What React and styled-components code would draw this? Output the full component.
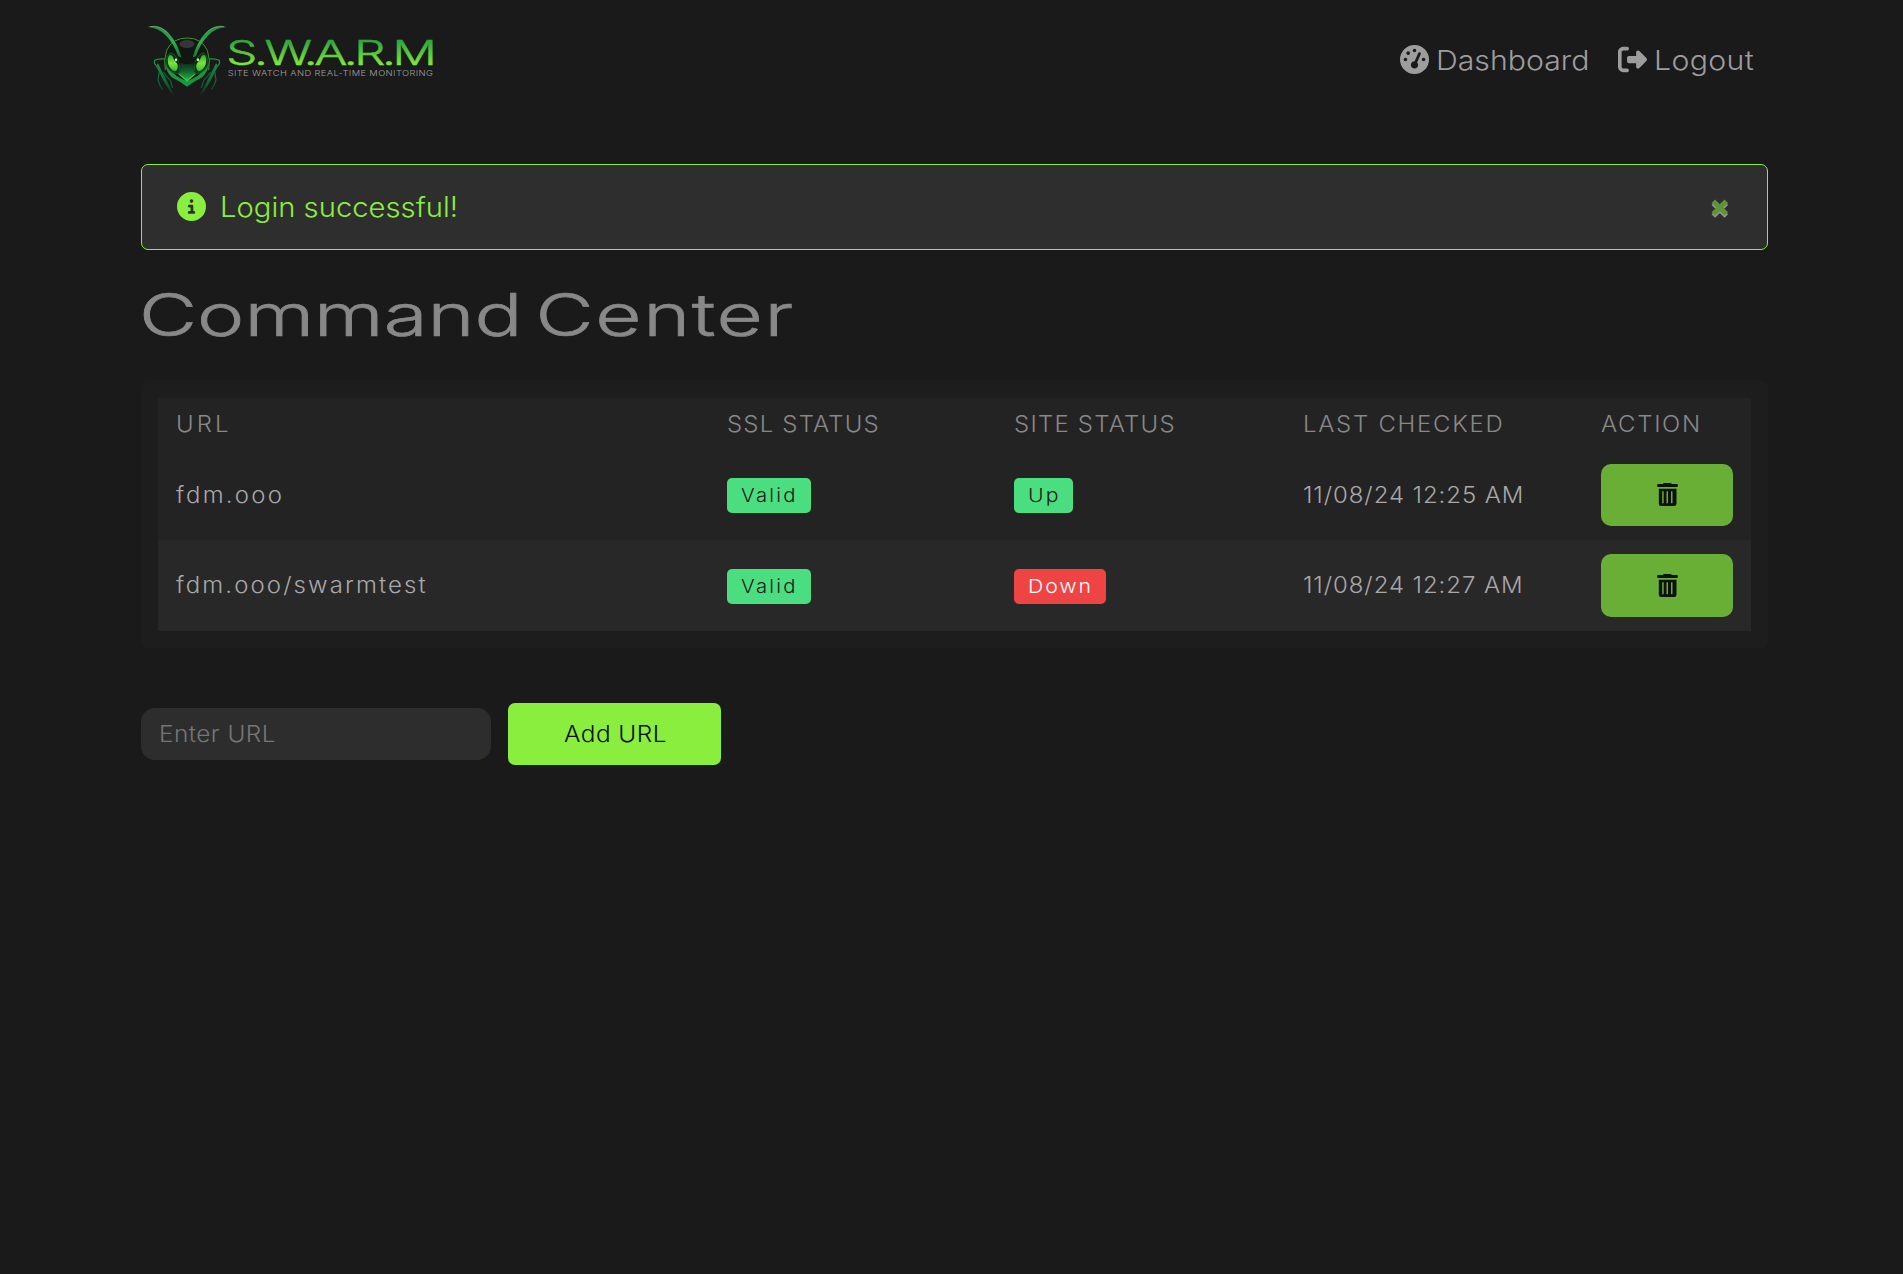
import React from 'react';
import styled, { createGlobalStyle } from 'styled-components';
import { FaGaugeHigh, FaRightFromBracket, FaCircleInfo } from 'react-icons/fa6';

const GlobalStyle = createGlobalStyle`
  *, *::before, *::after { box-sizing: border-box; }
  body {
    margin: 0;
    background: #1a1a1a;
    color: #a3a3a3;
    font-family: Inter, "Open Sans", sans-serif;
    font-weight: 300;
    font-size: 22.2px;
  }
`;

const Page = styled.div`
  width: 1627px;
  margin-left: 141px;
`;

const Header = styled.header`
  display: flex;
  justify-content: space-between;
  height: 120px;
  padding-top: 20px;
`;

const Nav = styled.nav`
  display: flex;
  align-items: center;
  height: 80px;
  width: 368px;
`;

const NavLink = styled.a`
  display: flex;
  align-items: center;
  gap: 7px;
  width: 218px;
  color: #9d9d9d;
  font-size: 27.5px;
  line-height: 80px;
  & svg { flex: none; width: 29px; height: 29px; margin-bottom: 2px; }
  & + & { width: 140px; }
`;

/* Widened text, scaled from its left edge */
const Wide = styled.span`
  display: inline-block;
  white-space: nowrap;
  transform: scaleX(${p => p.$scale || 1.08});
  transform-origin: 0 50%;
  letter-spacing: ${p => p.$spacing || 0}px;
`;

const Alert = styled.div`
  display: flex;
  align-items: center;
  height: 86px;
  margin-top: 44px;
  padding: 0 38px 0 34.5px;
  border: 1px solid #8aee3e;
  border-radius: 7px;
  background: #2e2e2e;
  color: #8aee3e;
  font-size: 27.7px;
  & > svg:first-child { width: 29px; height: 29px; margin: 0 14px 1px 0; }
`;

const Close = styled.button`
  display: flex;
  margin-left: auto;
  padding: 3px 0 0;
  border: 0;
  background: none;
`;

const Title = styled.h1`
  margin: 24px 0 0 -2.5px;
  height: 106px;
  padding-top: 4px;
  font-size: 59px;
  line-height: 74px;
  font-weight: 300;
  color: #888;
  word-spacing: -7px;
  -webkit-text-stroke: 0.7px #888;
`;

const TitleEnd = styled.span`
  letter-spacing: 1.2px;
`;

const Card = styled.section`
  height: 268px;
  padding: 18px 17px 17px;
  border-radius: 8px;
  background: #1d1d1d;
`;

const Table = styled.div`
  background: #232323;
`;

const Row = styled.div`
  display: grid;
  grid-template-columns: 551px 287px 289px 298px 132px;
  align-items: center;
  height: ${p => p.$height}px;
  padding-left: 18px;
  background: ${p => (p.$striped ? '#282828' : '#232323')};
  color: ${p => (p.$head ? '#888' : '#a8a8a8')};
`;

const Cell = styled.div`
  padding-bottom: 2px;
`;

const Badge = styled.span`
  display: inline-flex;
  align-items: center;
  justify-self: start;
  width: ${p => p.$width}px;
  height: 35px;
  margin-top: 1px;
  padding-left: 14px;
  border-radius: 5px;
  background: ${p => (p.$danger ? '#ef4444' : '#4ade80')};
  color: ${p => (p.$danger ? '#fff' : '#1a1a1a')};
  font-size: 18.8px;
`;

const DeleteButton = styled.button`
  display: flex;
  align-items: center;
  justify-content: center;
  width: 132px;
  height: 62.5px;
  padding: 0 0 1px;
  border: 0;
  border-radius: 10px;
  background: #6aaf35;
`;

const Form = styled.form`
  display: flex;
  align-items: center;
  gap: 17px;
  margin-top: 55px;
`;

const Field = styled.label`
  display: flex;
  align-items: center;
  width: 350px;
  height: 52px;
  padding: 0 0 1px 17.5px;
  border-radius: 14px;
  background: #2d2d2d;
  color: #757575;
`;

const AddButton = styled.button`
  width: 213px;
  height: 62px;
  padding: 0 0 1px 56px;
  border: 0;
  border-radius: 7px;
  background: #8aee3e;
  color: #0d0d0d;
  font: inherit;
  text-align: left;
`;

const Logo = () => (
  <svg width="295" height="80" viewBox="33 30 885 240" fill="none">
    <defs>
      <linearGradient id="word" x1="0" y1="92" x2="0" y2="168" gradientUnits="userSpaceOnUse">
        <stop offset="0" stopColor="#2fa63c" />
        <stop offset="1" stopColor="#86ea3c" />
      </linearGradient>
      <linearGradient id="face" x1="0" y1="150" x2="0" y2="216" gradientUnits="userSpaceOnUse">
        <stop offset="0" stopColor="#0b1f14" />
        <stop offset="0.5" stopColor="#12602f" />
        <stop offset="1" stopColor="#2fc540" />
      </linearGradient>
      <linearGradient id="arm" x1="0" y1="145" x2="0" y2="262" gradientUnits="userSpaceOnUse">
        <stop offset="0" stopColor="#1c9a48" />
        <stop offset="0.55" stopColor="#10693a" />
        <stop offset="1" stopColor="#10693a" stopOpacity="0.2" />
      </linearGradient>
      <linearGradient id="eye" x1="0" y1="132" x2="0" y2="188" gradientUnits="userSpaceOnUse">
        <stop offset="0" stopColor="#2fa233" />
        <stop offset="0.5" stopColor="#7be43a" />
        <stop offset="1" stopColor="#2fae32" />
      </linearGradient>
      <linearGradient id="feeler" x1="0" y1="48" x2="0" y2="145" gradientUnits="userSpaceOnUse">
        <stop offset="0" stopColor="#238c43" />
        <stop offset="0.5" stopColor="#2fae50" />
        <stop offset="1" stopColor="#176c36" />
      </linearGradient>
      <g id="half">
        <path d="M104 147 Q86 145 74 151 Q71 160 78 166 L88 183 L84 210 Q89 228 98 238" stroke="url(#arm)" strokeWidth="3.500" />
        <path d="M84 160 Q93 180 107 205 L134 260 Q104 225 92 196 L80 165 Z" fill="url(#arm)" />
        <path d="M100 186 Q110 201 121 211 L128 234" stroke="#116032" strokeWidth="3.500" />
        <path d="M52 51 Q88 40 116 69 Q143 99 154 142 L144 139 Q131 99 107 76 Q84 52 52 51 Z" fill="url(#feeler)" />
        <path d="M60 50 Q88 44 112 68" stroke="#80b479" strokeWidth="2" />
        <path d="M171 84 Q127 84 110 121 Q100 151 106 180" stroke="#41ad35" strokeWidth="2.5" />
        <path d="M106 160 Q107 184 125 202 Q151 215 171 230 L171 213 Q145 203 132 191 Q112 178 106 160" fill="#1b9540" />
        <path d="M121 128 Q102 143 111 170 Q120 188 143 191 Q155 176 145 153 Q137 132 121 128Z" fill="#063617" stroke="#187331" strokeWidth="2" />
        <path d="M120 134 Q110 142 115 163 Q121 181 136 184 Q147 176 141 158 Q132 137 120 134Z" fill="url(#eye)" />
        <path d="M130 138 Q134 152 147 162" stroke="#0a2414" strokeWidth="4" />
        <ellipse cx="138" cy="149" rx="3.500" ry="4.500" fill="#dbe4c4" />
      </g>
    </defs>
    <path d="M171 84 Q126 85 108 128 Q98 172 126 198 L171 223 L216 198 Q244 172 234 128 Q216 85 171 84Z" fill="#111612" />
    <ellipse cx="171" cy="102" rx="23" ry="12" fill="#353635" />
    <use href="#half" />
    <use href="#half" transform="translate(342 0) scale(-1 1)" />
    <path d="M152 158 Q171 168 190 158 L192 183 L197 193 L171 216 L145 193 L150 183Z" fill="url(#face)" />
    <path d="M146 192 L171 211 L196 192" stroke="#4fcf3b" strokeWidth="3" />
    <text x="289" y="166" textLength="621" lengthAdjust="spacingAndGlyphs" fontFamily="Inter, sans-serif" fontWeight="300" fontSize="100" letterSpacing="-7" fill="url(#word)" stroke="url(#word)" strokeWidth="1.5">S.W.A.R.M</text>
    <text x="293" y="198" textLength="617" lengthAdjust="spacingAndGlyphs" fontFamily="Inter, sans-serif" fontWeight="300" fontSize="24" letterSpacing="1" fill="#a0a0a0">SITE WATCH AND REAL-TIME MONITORING</text>
  </svg>
);

const CloseIcon = () => (
  <svg width="18" height="20" viewBox="0 0 18 20" fill="none" strokeWidth="5">
    <path d="M2.3 4.2 L15.3 17 M15.3 4.2 L2.3 17" stroke="#969696" />
    <path d="M2.3 2.2 L15.3 15 M15.3 2.2 L2.3 15" stroke="#5e9436" />
  </svg>
);

const TrashIcon = () => (
  <svg width="21" height="23" viewBox="0 0 62 69">
    <path fill="#0c120a" fillRule="evenodd" d="M17 3 Q18 0 22 0 H39 Q43 0 44 3 H59 Q62 3 62 6 V9 Q62 12 59 12 H3 Q0 12 0 9 V6 Q0 3 3 3Z M5 17 H58 V62 Q58 69 51 69 H12 Q5 69 5 62Z M15 25 V61 H19.5 V25Z M28 25 V61 H32.500 V25Z M41.500 25 V61 H46 V25Z" />
  </svg>
);

const columns = [
  ['URL', 2.8], ['SSL STATUS', 1.1], ['SITE STATUS', 1.15], ['LAST CHECKED', 1.6], ['ACTION', 1.55],
];

const sites = [
  { url: 'fdm.ooo', spacing: 2.1, up: true, checked: '11/08/24 12:25 AM', height: 90 },
  { url: 'fdm.ooo/swarmtest', spacing: 1.95, up: false, checked: '11/08/24 12:27 AM', height: 91 },
];

export default function App() {
  return (
    <>
      <GlobalStyle />
      <Page>
        <Header>
          <Logo />
          <Nav>
            <NavLink><FaGaugeHigh /><Wide $scale={1.1}>Dashboard</Wide></NavLink>
            <NavLink><FaRightFromBracket /><Wide $scale={1.1} $spacing={0.3}>Logout</Wide></NavLink>
          </Nav>
        </Header>
        <Alert>
          <FaCircleInfo />
          <Wide $scale={1.055}>Login successful!</Wide>
          <Close aria-label="Close"><CloseIcon /></Close>
        </Alert>
        <Title><Wide $scale={1.353}>Command <TitleEnd>Center</TitleEnd></Wide></Title>
        <Card>
          <Table>
            <Row $head $height={52}>
              {columns.map(([name, spacing]) => (
                <Cell key={name}><Wide $spacing={spacing}>{name}</Wide></Cell>
              ))}
            </Row>
            {sites.map((site, i) => (
              <Row key={site.url} $height={site.height} $striped={i % 2 === 1}>
                <Cell><Wide $spacing={site.spacing}>{site.url}</Wide></Cell>
                <Badge $width={84}><Wide $spacing={2.1}>Valid</Wide></Badge>
                <Badge $width={site.up ? 59 : 92} $danger={!site.up}>
                  <Wide $scale={1.13} $spacing={site.up ? 1.8 : 1.7}>{site.up ? 'Up' : 'Down'}</Wide>
                </Badge>
                <Cell><Wide $spacing={0.87}>{site.checked}</Wide></Cell>
                <DeleteButton aria-label="Delete"><TrashIcon /></DeleteButton>
              </Row>
            ))}
          </Table>
        </Card>
        <Form>
          <Field><Wide $scale={1.1} $spacing={0.4}>Enter URL</Wide></Field>
          <AddButton type="button"><Wide $scale={1.1} $spacing={0.4}>Add URL</Wide></AddButton>
        </Form>
      </Page>
    </>
  );
}
